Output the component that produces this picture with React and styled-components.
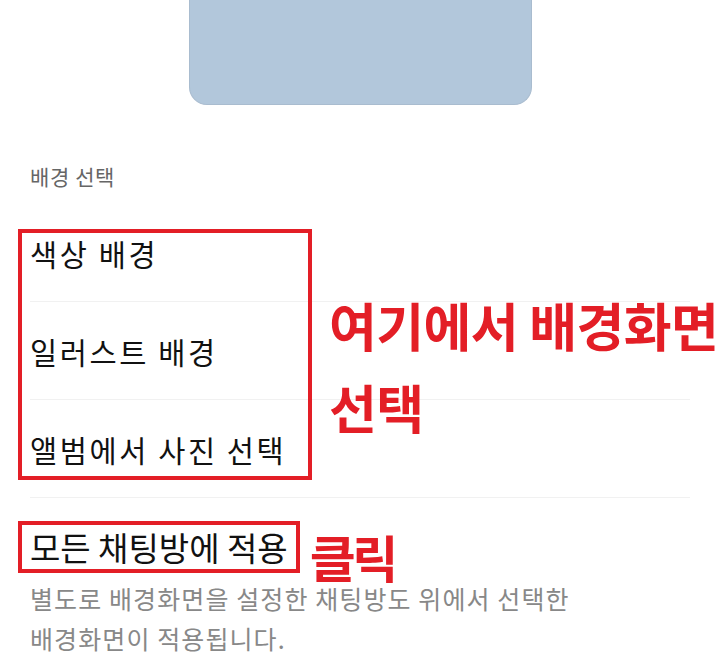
import styled, { createGlobalStyle } from "styled-components";

const GlobalStyle = createGlobalStyle`
  html, body {
    margin: 0;
    padding: 0;
    background: #ffffff;
  }
  body {
    font-family: "Noto Sans CJK KR", "Noto Sans", sans-serif;
  }
`;

const Page = styled.div`
  width: 720px;
  height: 661px;
  overflow: hidden;
  background: #ffffff;
`;

const Preview = styled.div`
  width: 343px;
  height: 105px;
  margin: 0 auto;
  background: #b2c7db;
  border: 1px solid #a9bccf;
  border-top: none;
  border-radius: 0 0 18px 18px;
  box-sizing: border-box;
`;

const SectionTitle = styled.h6`
  margin: 0;
  padding: 57px 30px 14px;
  font-size: 21px;
  line-height: 28px;
  letter-spacing: 0.6px;
  font-weight: 400;
  color: #666666;
`;

const List = styled.ul`
  position: relative;
  list-style: none;
  margin: 0;
  padding: 0;
`;

const Row = styled.li`
  height: 97px;
  margin: 0 30px;
  display: flex;
  align-items: center;
  border-bottom: 1px solid #f1f1f1;
  font-size: 29.5px;
  letter-spacing: 2.6px;
  color: #111111;
`;

const Highlight = styled.div`
  position: absolute;
  left: 18px;
  top: 25px;
  width: 294px;
  height: 251px;
  border: 4px solid #e31e26;
  box-sizing: border-box;
  pointer-events: none;
`;

const Note = styled.div`
  position: absolute;
  left: 329px;
  top: 80px;
  font-size: ${(p) => p.$size}px;
  font-weight: 700;
  line-height: 82px;
  letter-spacing: -0.6px;
  color: #e31e26;
  white-space: nowrap;
`;

const Apply = styled.section`
  padding: 23px 30px 0;
`;

const ApplyRow = styled.div`
  display: flex;
  align-items: flex-start;
`;

const ApplyTitle = styled.div`
  margin-left: -12px;
  padding: 0 8px;
  border: 4px solid ${(p) => (p.$marked ? "#e31e26" : "transparent")};
  font-size: 33px;
  line-height: 44px;
  color: #111111;
  white-space: nowrap;
`;

const Click = styled.span`
  margin: 15px 0 -15px 10px;
  font-size: 50px;
  line-height: 40px;
  font-weight: 700;
  letter-spacing: -3.5px;
  color: #e31e26;
`;

const Description = styled.p`
  margin: 5px 0 0;
  font-size: 25px;
  line-height: 40px;
  letter-spacing: 1.1px;
  color: #888888;
`;

const options = ["색상 배경", "일러스트 배경", "앨범에서 사진 선택"];

function App() {
  return (
    <Page>
      <GlobalStyle />
      <Preview />
      <SectionTitle>배경 선택</SectionTitle>
      <List>
        {options.map((item) => (
          <Row key={item}>{item}</Row>
        ))}
        <Highlight />
        <Note $size={52}>
          여기에서 배경화면
          <br />
          선택
        </Note>
      </List>
      <Apply>
        <ApplyRow>
          <ApplyTitle $marked>모든 채팅방에 적용</ApplyTitle>
          <Click>클릭</Click>
        </ApplyRow>
        <Description>
          별도로 배경화면을 설정한 채팅방도 위에서 선택한
          <br />
          배경화면이 적용됩니다.
        </Description>
      </Apply>
    </Page>
  );
}

export default App;
